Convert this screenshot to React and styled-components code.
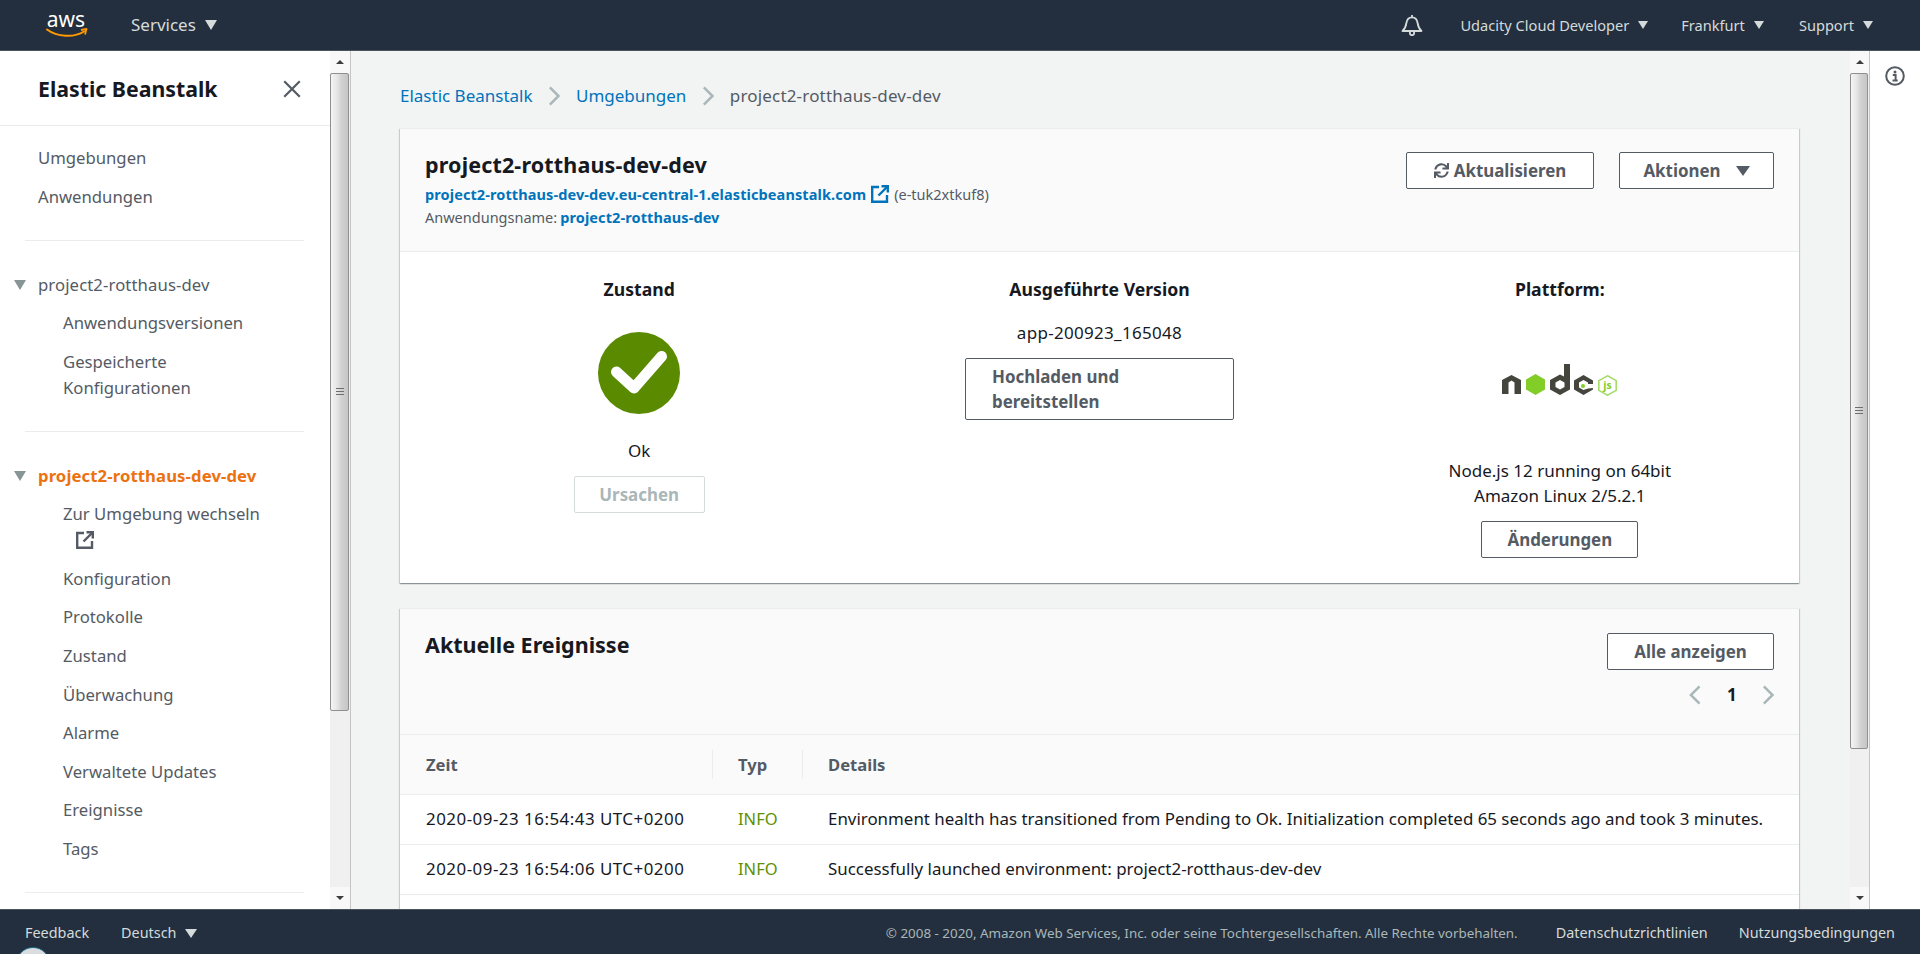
import React from 'react'
import styled, { createGlobalStyle } from 'styled-components'
import { FaSync } from 'react-icons/fa'

const GlobalStyle = createGlobalStyle`
  html, body {
    margin: 0;
    padding: 0;
    height: 100%;
    overflow: hidden;
    background: #fff;
  }
  body {
    font-family: 'Noto Sans', 'Open Sans', sans-serif;
    font-size: 17px;
    line-height: 24px;
    color: #16191f;
  }
  * { box-sizing: border-box; }
`

const Shell = styled.div`
  width: 1920px;
  height: 954px;
  display: flex;
  flex-direction: column;
  overflow: hidden;
`

const TopNav = styled.header`
  flex: 0 0 51px;
  height: 51px;
  background: #232f3e;
  border-bottom: 1px solid #4b535e;
  display: flex;
  align-items: center;
  padding-left: 46px;
  color: #d5dbdb;
`

const LogoWrap = styled.div`
  display: flex;
  margin-bottom: 7px;
`

const NavMenu = styled.span`
  display: inline-flex;
  align-items: center;
  gap: ${p => p.$gap || 9}px;
  margin-left: ${p => p.$left || 0}px;
  margin-right: ${p => p.$right || 0}px;
  font-size: ${p => p.$size || 14.6}px;
  white-space: nowrap;
`

const Caret = styled.i`
  display: inline-block;
  flex: none;
  width: 0;
  height: 0;
  border-left: ${p => p.$w / 2}px solid transparent;
  border-right: ${p => p.$w / 2}px solid transparent;
  border-top: ${p => p.$h}px solid ${p => p.$color || '#d5dbdb'};
`

const Spacer = styled.div`
  flex: 1;
`

const Body = styled.div`
  flex: 1;
  min-height: 0;
  display: flex;
`

const Sidebar = styled.aside`
  flex: 0 0 330px;
  background: #fff;
  overflow: hidden;
`

const SideHeader = styled.div`
  height: 75px;
  border-bottom: 1px solid #eaeded;
  padding: 2px 29px 0 38px;
  display: flex;
  align-items: center;
  justify-content: space-between;
`

const SideTitle = styled.div`
  font-size: 21.3px;
  font-weight: 700;
  color: #16191f;
`

const SideList = styled.nav`
  padding-top: 19px;
  color: #545b64;
  font-size: 16.7px;
`

const SideItem = styled.div`
  line-height: 26px;
  margin-bottom: 12.6px;
  padding-left: ${p => (p.$sub ? 63 : 38)}px;
  padding-right: 60px;
`

const SideGroup = styled.div`
  display: flex;
  align-items: center;
  gap: 12px;
  height: 26px;
  margin-bottom: 12px;
  padding-left: 14px;
  white-space: nowrap;
  letter-spacing: 0.1px;
  color: ${p => (p.$active ? '#ec7211' : '#545b64')};
  font-weight: ${p => (p.$active ? 700 : 400)};
`

const SideRule = styled.hr`
  border: 0;
  height: 1px;
  background: #eaeded;
  margin: 30.5px 26px 31px 25px;
`

const SideIcon = styled.span`
  display: block;
  height: 26px;
  padding: 3px 0 0 13px;
  color: #545b64;
`

const ScrollBar = styled.div`
  flex: 0 0 ${p => p.$w}px;
  display: flex;
  flex-direction: column;
  align-items: stretch;
  background: #f0f0f0;
  border-right: 1px solid #c4c6c6;
`

const ScrollStep = styled.div`
  flex: 0 0 22px;
  display: flex;
  align-items: center;
  justify-content: center;
  background: #f8f8f8;
  &::before {
    content: '';
    width: 0;
    height: 0;
    border-left: 4px solid transparent;
    border-right: 4px solid transparent;
    ${p => (p.$down ? 'border-top' : 'border-bottom')}: 4px solid #3c3c3c;
  }
`

const ScrollThumb = styled.div`
  flex: none;
  margin: 0 1px 0 0;
  border: 1px solid #8f8f8f;
  border-radius: 2px;
  background: linear-gradient(90deg, #f4f4f4 0%, #e6e6e6 35%, #d2d2d2 60%, #c6c6c8 100%);
  display: flex;
  align-items: center;
  justify-content: center;
  &::before {
    content: '';
    width: 8px;
    height: 8px;
    background: repeating-linear-gradient(180deg, #6e6e6e 0 1px, transparent 1px 3px);
  }
`

const ScrollTrack = styled.div`
  flex: 1;
`

const Main = styled.main`
  flex: 1;
  min-width: 0;
  background: #f2f3f3;
  padding: 33px 51px 0 49px;
  overflow: hidden;
`

const Crumbs = styled.div`
  display: flex;
  align-items: center;
  gap: 15.5px;
  height: 24px;
  margin-bottom: 20px;
  white-space: nowrap;
`

const CrumbLink = styled.a`
  color: #0073bb;
`

const CrumbLast = styled.span`
  color: #545b64;
  letter-spacing: 0.18px;
`

const Card = styled.section`
  background: #fff;
  border-top: 1px solid #eaeded;
  box-shadow: 0 1px 1px 0 rgba(0, 28, 36, 0.22), 1px 1px 1px 0 rgba(0, 28, 36, 0.15),
    -1px 1px 1px 0 rgba(0, 28, 36, 0.15);
  margin-bottom: 25px;
`

const CardHead = styled.div`
  background: #fafafa;
  border-bottom: 1px solid #eaeded;
  display: flex;
  justify-content: space-between;
  align-items: flex-start;
  padding: ${p => p.$pad};
`

const CardTitle = styled.h2`
  margin: 0;
  font-size: 21.5px;
  line-height: 28px;
  font-weight: 700;
  letter-spacing: ${p => (p.$tight ? 0 : 0.15)}px;
  color: #16191f;
`

const HeadMeta = styled.div`
  font-size: 14.5px;
  line-height: 24px;
  color: #545b64;
  white-space: nowrap;
  display: flex;
  align-items: center;
  margin-top: ${p => p.$top || 0}px;
`

const MetaLink = styled.a`
  color: #0073bb;
  font-weight: 700;
  letter-spacing: 0.1px;
  margin-left: ${p => p.$left || 0}px;
`

const MetaIcon = styled.span`
  display: inline-flex;
  margin: 0 5px;
  color: #0073bb;
`

const ButtonRow = styled.div`
  display: flex;
  gap: 25px;
  margin-top: ${p => p.$top || 0}px;
`

const Button = styled.button`
  font-family: inherit;
  font-size: 16.9px;
  font-weight: 700;
  line-height: 25px;
  height: ${p => p.$h || 37}px;
  width: ${p => p.$w}px;
  margin-top: ${p => p.$top || 0}px;
  background: #fff;
  color: ${p => (p.$disabled ? '#aab7b8' : '#545b64')};
  border: 1px solid ${p => (p.$disabled ? '#d5dbdb' : '#545b64')};
  border-radius: 2px;
  padding: ${p => (p.$left ? '0 26px' : '0')};
  text-align: ${p => (p.$left ? 'left' : 'center')};
  display: block;
  flex: none;
`

const ButtonInner = styled.span`
  display: inline-flex;
  align-items: center;
  gap: ${p => p.$gap || 5}px;
`

const Overview = styled.div`
  display: grid;
  grid-template-columns: repeat(3, 1fr);
  padding: 25px 9px;
`

const OverviewCol = styled.div`
  display: flex;
  flex-direction: column;
  align-items: center;
`

const ColTitle = styled.h3`
  margin: 0;
  font-size: 17.6px;
  line-height: 24px;
  font-weight: 700;
`

const HealthBadge = styled.div`
  width: 82px;
  height: 82px;
  margin: 31px 0 25px;
  border-radius: 50%;
  background: #5a8a00;
  display: flex;
  align-items: center;
  justify-content: center;
`

const ColText = styled.div`
  text-align: center;
  line-height: ${p => p.$line || 24}px;
  letter-spacing: ${p => p.$spacing || 0}px;
  margin: ${p => p.$margin};
`

const LogoBox = styled.div`
  height: 33px;
  margin-top: 62px;
`

const EventsHead = styled.div`
  display: flex;
  flex-direction: column;
  align-items: flex-end;
`

const Pager = styled.div`
  display: flex;
  align-items: center;
  height: 20px;
  margin-top: 15px;
  gap: 25px;
  font-weight: 700;
`

const TableRow = styled.div`
  display: grid;
  grid-template-columns: 312px 90px 1fr;
  align-items: center;
  height: ${p => (p.$head ? 60 : 50)}px;
  background: ${p => (p.$head ? '#fafafa' : '#fff')};
  border-bottom: 1px solid #eaeded;
  white-space: nowrap;
`

const HeadCell = styled.div`
  position: relative;
  padding-left: 26px;
  font-size: 16.6px;
  font-weight: 700;
  color: #545b64;
  height: 29px;
  line-height: 29px;
  &:not(:first-child)::before {
    content: '';
    position: absolute;
    left: 0;
    top: 0;
    bottom: 0;
    width: 1px;
    background: #eaeded;
  }
`

const Cell = styled.div`
  padding-left: 26px;
  letter-spacing: ${p => p.$spacing || 0}px;
  font-size: ${p => p.$size || 16.9}px;
  color: ${p => p.$color || '#16191f'};
`

const InfoRail = styled.aside`
  flex: 0 0 50px;
  background: #fff;
  display: flex;
  justify-content: center;
  padding-top: 15px;
  color: #545b64;
`

const Footer = styled.footer`
  flex: 0 0 45px;
  background: #232f3e;
  border-top: 1px solid #4b535e;
  color: #d5dbdb;
  display: flex;
  align-items: center;
  padding: 2px 25px 0;
  font-size: 14.4px;
  position: relative;
  white-space: nowrap;
`

const Copyright = styled.span`
  font-size: 13.4px;
  color: #aab7b8;
  margin-right: 38px;
`

const FooterLink = styled.span`
  margin-left: ${p => p.$left || 0}px;
`

const ChatBubble = styled.div`
  position: absolute;
  left: 16px;
  top: 37px;
  width: 34px;
  height: 34px;
  border-radius: 50%;
  background: radial-gradient(circle at 50% 40%, #b9574f 0 5px, #d9dde0 6px);
  border: 1px solid #1f6f8f;
`

const AwsLogo = () => (
  <svg width="42" height="35" viewBox="0 -8 42 35">
    <text x="20" y="14.500" textAnchor="middle" fontFamily="'Noto Sans', sans-serif" fontSize="21" fill="#fff">
      aws
    </text>
    <path d="M1 17.500c10 7.500 27 8.500 37 2" fill="none" stroke="#f90" strokeWidth="2" strokeLinecap="round" />
    <path d="M35 18l5.500-1-1.500 5.500" fill="none" stroke="#f90" strokeWidth="1.800" strokeLinejoin="round" />
  </svg>
)

const BellIcon = () => (
  <svg width="22" height="22" viewBox="0 0 22 22" fill="none" stroke="#d5dbdb" strokeWidth="1.800" strokeLinejoin="round">
    <path d="M1.500 17c3-2.600 3.400-4.600 3.900-8C5.900 5.600 8 3.300 11 3.300s5.100 2.300 5.600 5.700c.5 3.400.9 5.400 3.900 8z" />
    <path d="M11 1v2.300" />
    <circle cx="11" cy="19" r="2.200" />
  </svg>
)

const CloseIcon = () => (
  <svg width="18" height="18" viewBox="0 0 18 18" stroke="#545b64" strokeWidth="2.200" strokeLinecap="square">
    <path d="M2 2l14 14M16 2L2 16" />
  </svg>
)

const ExternalIcon = ({ size = 18 }) => (
  <svg width={size} height={size} viewBox="0 0 18 18" fill="none" stroke="currentColor" strokeWidth="2.400">
    <path d="M8 2H1.200v14.800H16V10" />
    <path d="M7.500 10.500L16 2" />
    <path d="M10.500 1.200h6.300v6.300" />
  </svg>
)

const Chevron = ({ left, height = 20 }) => (
  <svg width={height * 0.62} height={height} viewBox="0 0 10 16" fill="none" stroke="#aab7b8" strokeWidth="2">
    <path d={left ? 'M8.500 1L1.500 8l7 7' : 'M1.500 1l7 7-7 7'} />
  </svg>
)

const CheckMark = () => (
  <svg width="56" height="44" viewBox="0 0 56 44" fill="none" stroke="#fff" strokeWidth="11" strokeLinecap="round" strokeLinejoin="round">
    <path d="M5.500 21L23 37 50.500 5.500" />
  </svg>
)

const InfoIcon = () => (
  <svg width="20" height="20" viewBox="0 0 20 20" fill="none" stroke="currentColor">
    <circle cx="10" cy="10" r="8.800" strokeWidth="2" />
    <circle cx="10" cy="6" r="1.500" fill="currentColor" stroke="none" />
    <path d="M7.800 9h2.800v5.200M7.500 14.500h5.200" strokeWidth="2" />
  </svg>
)

const NodeLogo = () => (
  <svg width="116" height="33" viewBox="0 0 116 33">
    <path d="M0 17l9.500-5 9.500 5v14h-6.500V19.500l-3-2-3 2V31H0z" fill="#44453c" />
    <path d="M33.500 11l9.500 5.500v10L33.500 32 24 26.500v-10z" fill="#83cd29" />
    <path
      d="M62 1h6v25.500L58 32l-10-5.500V17l10-5.500 4 2zM58 17l-4.500 2.500V24l4.500 2.500 4.500-2.500v-4.500z"
      fill="#44453c"
      fillRule="evenodd"
    />
    <path d="M81.500 12l9.500 5.500v9L81.500 32 72 26.500v-9z" fill="#44453c" />
    <path d="M77 19.500l4.500-2.500 4.500 2.500V21h6v4l-6 .5-4.500 1.500-4.500-2.500z" fill="#fff" />
    <circle cx="81" cy="23" r="2" fill="#83cd29" />
    <path d="M105.500 12.800l8.700 4.800v9.800l-8.700 4.800-8.700-4.800v-9.800z" fill="none" stroke="#a5dc69" strokeWidth="1.600" />
    <text x="105.500" y="26" textAnchor="middle" fontFamily="'Noto Sans', sans-serif" fontSize="10.500" fontWeight="700" fill="#83cd29">
      js
    </text>
  </svg>
)

const Scroll = ({ thumb, width }) => (
  <ScrollBar $w={width}>
    <ScrollStep />
    <ScrollThumb style={{ height: thumb }} />
    <ScrollTrack />
    <ScrollStep $down />
  </ScrollBar>
)

const appItems = ['Konfiguration', 'Protokolle', 'Zustand', 'Überwachung', 'Alarme', 'Verwaltete Updates', 'Ereignisse', 'Tags']

const events = [
  ['2020-09-23 16:54:43 UTC+0200', 'Environment health has transitioned from Pending to Ok. Initialization completed 65 seconds ago and took 3 minutes.'],
  ['2020-09-23 16:54:06 UTC+0200', 'Successfully launched environment: project2-rotthaus-dev-dev'],
]

export default function App() {
  return (
    <Shell>
      <GlobalStyle />
      <TopNav>
        <LogoWrap>
          <AwsLogo />
        </LogoWrap>
        <NavMenu $left={43} $size={17}>
          Services <Caret $w={13} $h={10} />
        </NavMenu>
        <Spacer />
        <BellIcon />
        <NavMenu $left={37}>
          Udacity Cloud Developer <Caret $w={11} $h={8} />
        </NavMenu>
        <NavMenu $left={33}>
          Frankfurt <Caret $w={11} $h={8} />
        </NavMenu>
        <NavMenu $left={35} $right={47}>
          Support <Caret $w={11} $h={8} />
        </NavMenu>
      </TopNav>

      <Body>
        <Sidebar>
          <SideHeader>
            <SideTitle>Elastic Beanstalk</SideTitle>
            <CloseIcon />
          </SideHeader>
          <SideList>
            <SideItem>Umgebungen</SideItem>
            <SideItem>Anwendungen</SideItem>
            <SideRule />
            <SideGroup>
              <Caret $w={12} $h={10} $color="#879596" />
              project2-rotthaus-dev
            </SideGroup>
            <SideItem $sub>Anwendungsversionen</SideItem>
            <SideItem $sub>Gespeicherte Konfigurationen</SideItem>
            <SideRule />
            <SideGroup $active>
              <Caret $w={12} $h={10} $color="#879596" />
              project2-rotthaus-dev-dev
            </SideGroup>
            <SideItem $sub>
              Zur Umgebung wechseln
              <SideIcon>
                <ExternalIcon />
              </SideIcon>
            </SideItem>
            {appItems.map(item => (
              <SideItem $sub key={item}>
                {item}
              </SideItem>
            ))}
            <SideRule />
          </SideList>
        </Sidebar>
        <Scroll thumb={638} width={21} />

        <Main>
          <Crumbs>
            <CrumbLink>Elastic Beanstalk</CrumbLink>
            <Chevron />
            <CrumbLink>Umgebungen</CrumbLink>
            <Chevron />
            <CrumbLast>project2-rotthaus-dev-dev</CrumbLast>
          </Crumbs>

          <Card>
            <CardHead $pad="22px 25px 22px">
              <div>
                <CardTitle>project2-rotthaus-dev-dev</CardTitle>
                <HeadMeta $top={3}>
                  <MetaLink>project2-rotthaus-dev-dev.eu-central-1.elasticbeanstalk.com</MetaLink>
                  <MetaIcon>
                    <ExternalIcon />
                  </MetaIcon>
                  (e-tuk2xtkuf8)
                </HeadMeta>
                <HeadMeta $top={-1}>
                  Anwendungsname: <MetaLink $left={3}>project2-rotthaus-dev</MetaLink>
                </HeadMeta>
              </div>
              <ButtonRow $top={1}>
                <Button $w={188}>
                  <ButtonInner>
                    <FaSync size={15} /> Aktualisieren
                  </ButtonInner>
                </Button>
                <Button $w={155}>
                  <ButtonInner $gap={15}>
                    Aktionen <Caret $w={14} $h={10} $color="#545b64" />
                  </ButtonInner>
                </Button>
              </ButtonRow>
            </CardHead>
            <Overview>
              <OverviewCol>
                <ColTitle>Zustand</ColTitle>
                <HealthBadge>
                  <CheckMark />
                </HealthBadge>
                <ColText $margin="0 0 13px">Ok</ColText>
                <Button $w={131} $disabled>
                  Ursachen
                </Button>
              </OverviewCol>
              <OverviewCol>
                <ColTitle>Ausgeführte Version</ColTitle>
                <ColText $margin="20px 0 13px" $spacing={0.3}>
                  app-200923_165048
                </ColText>
                <Button $w={269} $h={62} $left>
                  Hochladen und bereitstellen
                </Button>
              </OverviewCol>
              <OverviewCol>
                <ColTitle>Plattform:</ColTitle>
                <LogoBox>
                  <NodeLogo />
                </LogoBox>
                <ColText $line={25} $margin="62px 0 12.500px">
                  Node.js 12 running on 64bit
                  <br />
                  Amazon Linux 2/5.2.1
                </ColText>
                <Button $w={157}>Änderungen</Button>
              </OverviewCol>
            </Overview>
          </Card>

          <Card>
            <CardHead $pad="22px 25px 29px">
              <CardTitle $tight>Aktuelle Ereignisse</CardTitle>
              <EventsHead>
                <Button $w={167} $top={2}>
                  Alle anzeigen
                </Button>
                <Pager>
                  <Chevron left />
                  1
                  <Chevron />
                </Pager>
              </EventsHead>
            </CardHead>
            <TableRow $head>
              <HeadCell>Zeit</HeadCell>
              <HeadCell>Typ</HeadCell>
              <HeadCell>Details</HeadCell>
            </TableRow>
            {events.map(([time, detail]) => (
              <TableRow key={time}>
                <Cell $spacing={0.5}>{time}</Cell>
                <Cell $color="#5f9100" $size={16.5}>
                  INFO
                </Cell>
                <Cell>{detail}</Cell>
              </TableRow>
            ))}
            <TableRow />
          </Card>
        </Main>
        <Scroll thumb={676} width={20} />
        <InfoRail>
          <InfoIcon />
        </InfoRail>
      </Body>

      <Footer>
        <FooterLink>Feedback</FooterLink>
        <NavMenu $left={32} $size={14.4}>
          Deutsch <Caret $w={12} $h={9} />
        </NavMenu>
        <Spacer />
        <Copyright>© 2008 - 2020, Amazon Web Services, Inc. oder seine Tochtergesellschaften. Alle Rechte vorbehalten.</Copyright>
        <FooterLink>Datenschutzrichtlinien</FooterLink>
        <FooterLink $left={31}>Nutzungsbedingungen</FooterLink>
        <ChatBubble />
      </Footer>
    </Shell>
  )
}
